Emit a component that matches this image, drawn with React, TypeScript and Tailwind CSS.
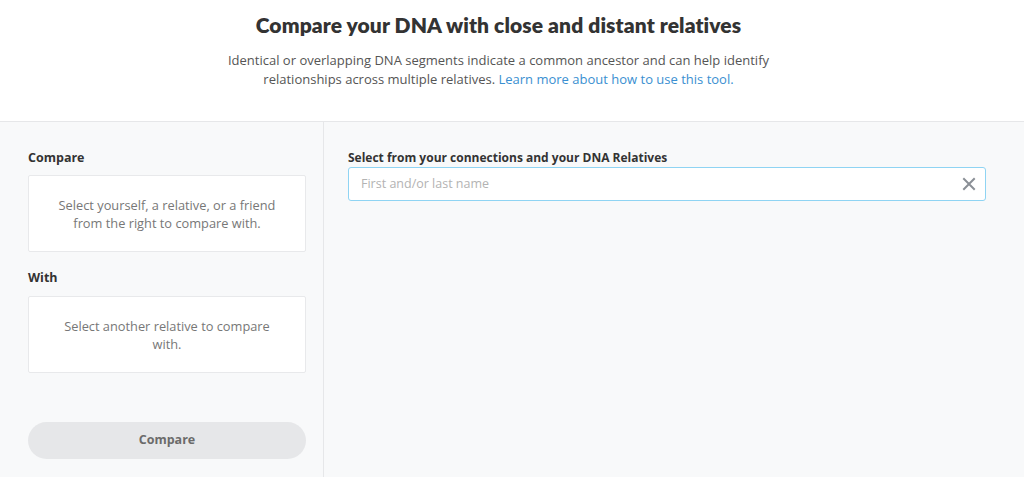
import React from "react";

export default function App() {
  return (
    <div className="w-[1024px] h-[477px] overflow-hidden bg-[#f8f9fa] flex flex-col" style={{ fontFamily: '"Open Sans", "Liberation Sans", sans-serif' }}>
      <header className="h-[122px] shrink-0 bg-white border-b border-[#e6e7e9] flex flex-col items-center pr-[27px]">
        <h1 className="mt-[10px] text-[21px] leading-[29px] font-bold text-[#333] tracking-[0.1px]" style={{ fontFamily: 'Lato, "Open Sans", sans-serif', fontWeight: 800 }}>
          Compare your DNA with close and distant relatives
        </h1>
        <p className="mt-[12px] w-[560px] text-center text-[13px] leading-[19px] text-[#555]">
          Identical or overlapping DNA segments indicate a common ancestor and can help identify relationships across multiple relatives.{" "}
          <span className="text-[#3a8fd1]">Learn more about how to use this tool.</span>
        </p>
      </header>
      <div className="flex flex-1">
        <aside className="w-[324px] shrink-0 border-r border-[#e6e7e9] pl-[28px] pr-[17px] flex flex-col">
          <div className="mt-[28px] text-[12.5px] leading-[16px] font-bold text-[#333]">Compare</div>
          <div className="mt-[9px] h-[77px] bg-white border border-[#e8e9eb] rounded-[2px] flex items-center justify-center text-center text-[12.8px] leading-[18px] text-[#777] px-[16px]">
            Select yourself, a relative, or a friend<br />from the right to compare with.
          </div>
          <div className="mt-[18px] text-[12.5px] leading-[16px] font-bold text-[#333]">With</div>
          <div className="mt-[10px] h-[77px] bg-white border border-[#e8e9eb] rounded-[2px] flex items-center justify-center text-center text-[12.8px] leading-[18px] text-[#777] px-[30px]">
            Select another relative to compare with.
          </div>
          <button className="mt-[49px] h-[37px] w-full rounded-full bg-[#e6e7e9] text-[12.5px] font-bold text-[#6b6b6b]">
            Compare
          </button>
        </aside>
        <main className="flex-1 pl-[24px] pr-[38px]">
          <div className="mt-[28px] text-[12px] leading-[16px] font-bold text-[#333]">Select from your connections and your DNA Relatives</div>
          <div className="mt-[1px] h-[34px] bg-white border border-[#8fd4f3] rounded-[3px] flex items-center pl-[12px] pr-[9px]">
            <span className="flex-1 text-[12.5px] text-[#b3b3b3]">First and/or last name</span>
            <svg width="14" height="14" viewBox="0 0 14 14" className="text-[#8a8f96]">
              <path d="M2 2 L12 12 M12 2 L2 12" stroke="currentColor" strokeWidth="2" strokeLinecap="square" />
            </svg>
          </div>
        </main>
      </div>
    </div>
  );
}
